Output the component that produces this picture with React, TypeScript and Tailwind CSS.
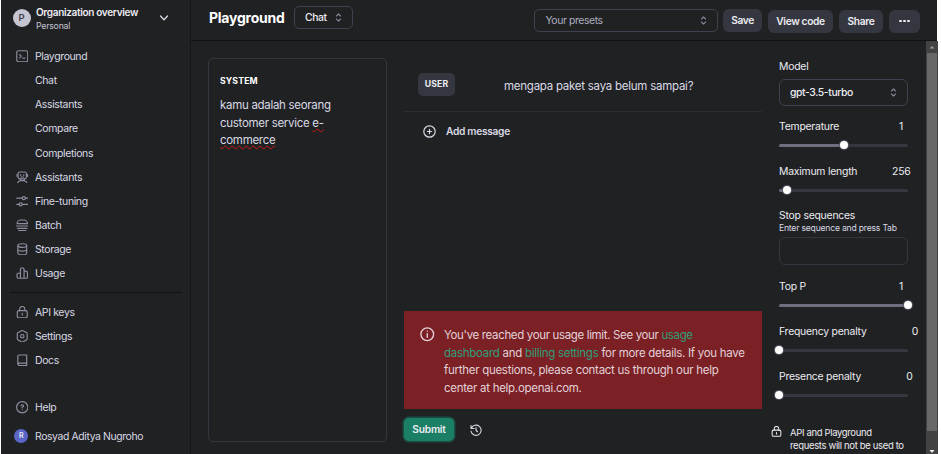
import type { ReactNode } from "react";

type IconProps = { children: ReactNode; className?: string };

function Icon({ children, className = "size-[12.500px]" }: IconProps) {
  return (
    <svg
      viewBox="0 0 24 24"
      fill="none"
      stroke="currentColor"
      strokeWidth="2.200"
      strokeLinecap="round"
      strokeLinejoin="round"
      className={`shrink-0 ${className}`}
    >
      {children}
    </svg>
  );
}

const terminal = (
  <Icon>
    <rect x="1.500" y="1.500" width="21" height="21" rx="3.500" />
    <path d="m7 9 3 3-3 3M13 15.500h4" />
  </Icon>
);
const robot = (
  <Icon>
    <rect x="4" y="2" width="16" height="13" rx="3.500" />
    <path d="M2 6.500v4M22 6.500v4M9 7v1.500M15 7v1.500M9.500 11.500h5M3 23c1-3 3-4.500 6-4.500h6c3 0 5 1.500 6 4.500M8 15.500v3M16 15.500v3" />
  </Icon>
);
const sliders = (
  <Icon>
    <circle cx="15" cy="6" r="3" />
    <circle cx="9" cy="18" r="3" />
    <path d="M1.500 6H12M18 6h4.500M1.500 18H6M12 18h10.500" />
  </Icon>
);
const batch = (
  <Icon>
    <path d="M2 9c0-4 3.500-7 7-7h6c3.500 0 7 3 7 7ZM1 13.500h22M3 18h18M5 22h14" />
  </Icon>
);
const storage = (
  <Icon>
    <ellipse cx="12" cy="5" rx="8.500" ry="3.500" />
    <path d="M3.500 5v14c0 2 3.800 3.500 8.500 3.500s8.500-1.500 8.500-3.500V5M3.500 12c0 2 3.800 3.500 8.500 3.500s8.500-1.500 8.500-3.500" />
  </Icon>
);
const usage = (
  <Icon>
    <path d="M8.500 21.500H4a2 2 0 0 1-2-2V14a2 2 0 0 1 2-2h4.500M8.500 21.500V5a3.500 3.500 0 0 1 7 0v16.500ZM15.500 8H19a3 3 0 0 1 3 3v8.500a2 2 0 0 1-2 2h-4.500" />
  </Icon>
);
const lock = (
  <>
    <rect x="2.500" y="9" width="19" height="13.500" rx="3" />
    <path d="M7 9V6a5 5 0 0 1 10 0v3M12 14v3.500" />
  </>
);
const settings = (
  <Icon>
    <path d="M9.800 1.700a4 4 0 0 1 4.400 0L20 5A3 3 0 0 1 21.500 8v8a3 3 0 0 1-1.500 3l-5.800 3.300a4 4 0 0 1-4.400 0L4 19A3 3 0 0 1 2.500 16V8A3 3 0 0 1 4 5Z" />
    <circle cx="12" cy="12" r="3.300" />
  </Icon>
);
const docs = (
  <Icon>
    <path d="M20.500 17.500V2h-14a3 3 0 0 0-3 3v14.500M20.500 17.500H6a2.300 2.300 0 0 0 0 4.500h14.500ZM20.500 17.500V22" />
  </Icon>
);
const help = (
  <Icon>
    <circle cx="12" cy="12" r="10.800" />
    <path d="M9.500 9.500c.3-3 5-3 5 0 0 1.700-2.500 1.700-2.500 3.700M12 16.800v.2" />
  </Icon>
);

function UpDown() {
  return (
    <svg viewBox="0 0 8 10" fill="none" stroke="#8e8ea0" strokeWidth="1.200" strokeLinecap="round" strokeLinejoin="round" className="h-[9px] w-[7px] shrink-0">
      <path d="M1.500 3.300 4 1l2.500 2.300M1.500 6.700 4 9l2.500-2.300" />
    </svg>
  );
}

function NavItem({ icon, label }: { icon?: ReactNode; label: string }) {
  return (
    <div className="flex h-[24.15px] items-center text-[10.500px] tracking-[-0.380px] text-[#d9d9e3]">
      <span className="w-[19.500px] text-[#8e8ea0]">{icon}</span>
      <span className="pt-[1.500px]">{label}</span>
    </div>
  );
}

function Slider({ label, value, percent, inset = "pr-1" }: { label: string; value: string; percent: number; inset?: string }) {
  return (
    <div className="h-[45px]">
      <div className={`flex h-[14px] w-[141px] items-center justify-between text-[10.400px] tracking-[-0.220px] ${inset}`}>
        <span>{label}</span>
        <span>{value}</span>
      </div>
      <div className="relative mt-[9.500px] h-[3px] w-[129px] rounded-full bg-[#353740]">
        <div className="h-full rounded-full bg-[#6e6e80]" style={{ width: `${percent}%` }} />
        <div
          className="absolute top-1/2 size-[8px] -translate-x-1/2 -translate-y-1/2 rounded-full bg-white shadow-[0_0_1px_1px_#565869]"
          style={{ left: `${percent}%` }}
        />
      </div>
    </div>
  );
}

function Sidebar() {
  return (
    <aside className="flex h-full w-[190px] shrink-0 flex-col border-r border-[#141516]">
      <div className="flex h-[44px] items-start pt-[6px] pl-[11.500px]">
        <div className="mt-[3px] flex size-[18px] items-center justify-center rounded-full bg-[#c5c5d2] text-[9.500px] font-semibold text-[#40414f]">P</div>
        <div className="ml-[5.500px] w-[122px]">
          <div className="h-[13px] text-[10px] leading-[13px] font-semibold tracking-[-0.320px] text-[#ececf1]">Organization overview</div>
          <div className="text-[8.700px] leading-[14px] tracking-[-0.200px] text-[#c5c5d2]">Personal</div>
        </div>
        <svg viewBox="0 0 10 6" fill="none" stroke="#d9d9e3" strokeWidth="1.300" strokeLinecap="round" strokeLinejoin="round" className="mt-[9px] ml-[1px] h-[6px] w-[10px]">
          <path d="m1.500 1 3.500 3.700L8.500 1" />
        </svg>
      </div>
      <nav className="pl-[14.500px]">
        <NavItem icon={terminal} label="Playground" />
        <NavItem label="Chat" />
        <NavItem label="Assistants" />
        <NavItem label="Compare" />
        <NavItem label="Completions" />
        <NavItem icon={robot} label="Assistants" />
        <NavItem icon={sliders} label="Fine-tuning" />
        <NavItem icon={batch} label="Batch" />
        <NavItem icon={storage} label="Storage" />
        <NavItem icon={usage} label="Usage" />
      </nav>
      <div className="mt-[6.500px] ml-[9px] h-px w-[172px] bg-[#111213]" />
      <nav className="mt-[7px] pl-[14.500px]">
        <NavItem icon={<Icon>{lock}</Icon>} label="API keys" />
        <NavItem icon={settings} label="Settings" />
        <NavItem icon={docs} label="Docs" />
      </nav>
      <div className="mt-[23px] pl-[14.500px]">
        <NavItem icon={help} label="Help" />
      </div>
      <div className="mt-[5px] flex h-[24px] items-center pl-[13px] text-[10.400px] tracking-[-0.380px] text-[#d9d9e3]">
        <span className="mr-[7px] flex size-[14px] items-center justify-center rounded-full bg-[#5a67c8] text-[7px] font-semibold text-[#ececf1]">R</span>
        <span className="pt-px">Rosyad Aditya Nugroho</span>
      </div>
    </aside>
  );
}

function HeaderButton({ children, className }: { children: ReactNode; className: string }) {
  return (
    <button className={`flex items-center justify-center rounded-[6px] bg-[#353740] text-[10.200px] font-semibold tracking-[-0.350px] text-[#ececf1] ${className}`}>
      {children}
    </button>
  );
}

function Header() {
  return (
    <header className="flex h-[41px] shrink-0 items-start border-b border-[#111213] pl-[18px]">
      <h1 className="mt-[9px] w-[85px] text-[14px] leading-[18px] font-bold tracking-[-0.250px] text-white">Playground</h1>
      <div className="mt-[6px] flex h-[23px] w-[59px] items-center justify-between rounded-[5px] border border-[#40414f] pr-[10px] pl-[10px] text-[10.400px] font-medium tracking-[-0.400px] text-[#ececf1]">
        Chat
        <UpDown />
      </div>
      <div className="mt-[9px] ml-[181px] flex h-[23px] w-[184px] items-center justify-between rounded-[5px] border border-[#40414f] pr-[10px] pl-[10.500px] text-[10.400px] tracking-[-0.400px] text-[#acacbe]">
        <span className="pt-px">Your presets</span>
        <UpDown />
      </div>
      <HeaderButton className="mt-[8.500px] ml-[5px] h-[23px] w-[39px] pt-px">Save</HeaderButton>
      <HeaderButton className="mt-[9.500px] ml-[6px] h-[23px] w-[65px] pt-px">View code</HeaderButton>
      <HeaderButton className="mt-[9.500px] ml-[6px] h-[23px] w-[44px] pt-px">Share</HeaderButton>
      <HeaderButton className="mt-[9.500px] ml-[6px] h-[23px] w-[31px] gap-[1.500px]">
        <i className="size-[2.500px] rounded-full bg-[#ececf1]" />
        <i className="size-[2.500px] rounded-full bg-[#ececf1]" />
        <i className="size-[2.500px] rounded-full bg-[#ececf1]" />
      </HeaderButton>
    </header>
  );
}

const misspelt = "underline decoration-[#d01818] decoration-wavy decoration-[1px] underline-offset-[1px]";

export default function App() {
  return (
    <div className="h-[454px] w-[941px] overflow-hidden bg-white pl-px font-[Inter,'Liberation_Sans',sans-serif]">
      <div className="flex h-full w-[936px] bg-[#202123]">
        <Sidebar />
        <div className="flex min-w-0 flex-1 flex-col">
          <Header />
          <div className="flex min-h-0 flex-1">
            <section className="mt-[17px] ml-[17px] h-[384px] w-[179px] shrink-0 rounded-[5px] border border-[#353740] pt-[17px] pl-[11px]">
              <div className="text-[8.700px] leading-[10px] font-bold tracking-[0.150px] text-white">SYSTEM</div>
              <p className="mt-[11px] text-[11.500px] leading-[17.700px] tracking-[-0.300px] text-[#d9d9e3]">
                kamu adalah seorang
                <br />
                customer service <span className={misspelt}>e-</span>
                <br />
                <span className={misspelt}>commerce</span>
              </p>
            </section>

            <main className="ml-[17px] flex w-[358px] shrink-0 flex-col">
              <div className="flex h-[71px] items-start border-b border-[#2c2d32] pt-[32px] pl-[14px]">
                <span className="flex h-[23px] w-[37px] items-center justify-center rounded-[5px] bg-[#353740] pt-px text-[8.700px] font-bold tracking-[0.150px] text-[#ececf1]">USER</span>
                <span className="mt-[6px] ml-[49px] text-[11.500px] leading-[15px] tracking-[-0.250px] text-[#d9d9e3]">mengapa paket saya belum sampai?</span>
              </div>
              <div className="flex h-[38px] items-center pl-[19px] text-[10.200px] font-semibold tracking-[-0.300px] text-[#d9d9e3]">
                <Icon className="mr-[10px] size-[13px]">
                  <circle cx="12" cy="12" r="10.500" />
                  <path d="M12 8v8M8 12h8" />
                </Icon>
                <span className="pt-px">Add message</span>
              </div>
              <div className="mt-[161px] flex h-[98px] bg-[#7b2024] pt-[16px] pl-[16px] text-[#e2d1d8]">
                <Icon className="mr-[9.500px] size-[14.500px]">
                  <circle cx="12" cy="12" r="10.500" />
                  <path d="M12 11v6M12 7v.2" />
                </Icon>
                <p className="text-[11.500px] leading-[17.600px] tracking-[-0.280px] whitespace-nowrap">
                  <span className="tracking-[-0.350px]">
                    You've reached your usage limit. See your <span className="text-[#2f9f78]">usage</span>
                  </span>
                  <br />
                  <span className="text-[#2f9f78]">dashboard</span> and <span className="text-[#2f9f78]">billing settings</span> for more details. If you have
                  <br />
                  further questions, please contact us through our help
                  <br />
                  center at help.openai.com.
                </p>
              </div>
              <div className="mt-[9px] flex items-center">
                <button className="h-[23px] w-[50px] rounded-[5px] bg-[#1a7f64] pt-px text-[10.200px] font-semibold tracking-[-0.230px] text-[#ececf1] shadow-[0_0_0_1.500px_#1b4f43]">Submit</button>
                <Icon className="ml-[16px] size-[12px] text-[#d9d9e3]">
                  <path d="M2 3v6h6M2.500 9A10.200 10.200 0 1 1 2 14M12 7v5.500l3 3" />
                </Icon>
              </div>
            </main>

            <aside className="ml-[8px] w-[156px] shrink-0 overflow-hidden pt-[18.500px] pl-[9px] text-[#ececf1]">
              <div className="text-[10.400px] leading-[14px] tracking-[-0.220px]">Model</div>
              <div className="mt-[5.500px] flex h-[27px] w-[129px] items-center justify-between rounded-[6px] border border-[#40414f] pr-[10px] pl-[10px] text-[10.400px] font-medium tracking-[-0.400px]">
                <span className="pt-px">gpt-3.5-turbo</span>
                <UpDown />
              </div>
              <div className="mt-[14px]">
                <Slider label="Temperature" value="1" percent={50} inset="pr-[17px]" />
                <Slider label="Maximum length" value="256" percent={6} inset="pr-[9.500px]" />
              </div>
              <div className="-mt-[1px] text-[10.400px] leading-[14px] tracking-[-0.220px]">Stop sequences</div>
              <div className="text-[8.600px] leading-[11px] tracking-[-0.200px] text-[#d9d9e3]">Enter sequence and press Tab</div>
              <div className="mt-[3px] h-[28px] w-[129px] rounded-[6px] border border-[#353740]" />
              <div className="mt-[15px]">
                <Slider label="Top P" value="1" percent={100} inset="pr-[17px]" />
                <Slider label="Frequency penalty" value="0" percent={0} inset="pr-[2px]" />
                <Slider label="Presence penalty" value="0" percent={0} inset="pr-[7.500px]" />
              </div>
              <div className="mt-[11px] -ml-[8px] flex">
                <Icon className="size-[11px]">{lock}</Icon>
                <p className="ml-[8px] text-[9.500px] leading-[13px] tracking-[-0.350px] whitespace-nowrap">
                  API and Playground
                  <br />
                  requests will not be used to
                </p>
              </div>
            </aside>

            <div className="flex flex-1 flex-col items-center bg-[#424242]">
              <svg viewBox="0 0 12 12" className="size-[12px] shrink-0">
                <path d="M3.500 7.500 6 5l2.500 2.500Z" fill="#9a9a9a" />
              </svg>
              <div className="h-[378px] w-[10px] shrink-0 bg-[#686868]" />
              <svg viewBox="0 0 12 12" className="mt-[14px] size-[12px] shrink-0">
                <path d="M3.500 5h5L6 8Z" fill="#f1f1f1" />
              </svg>
            </div>
          </div>
        </div>
      </div>
    </div>
  );
}
